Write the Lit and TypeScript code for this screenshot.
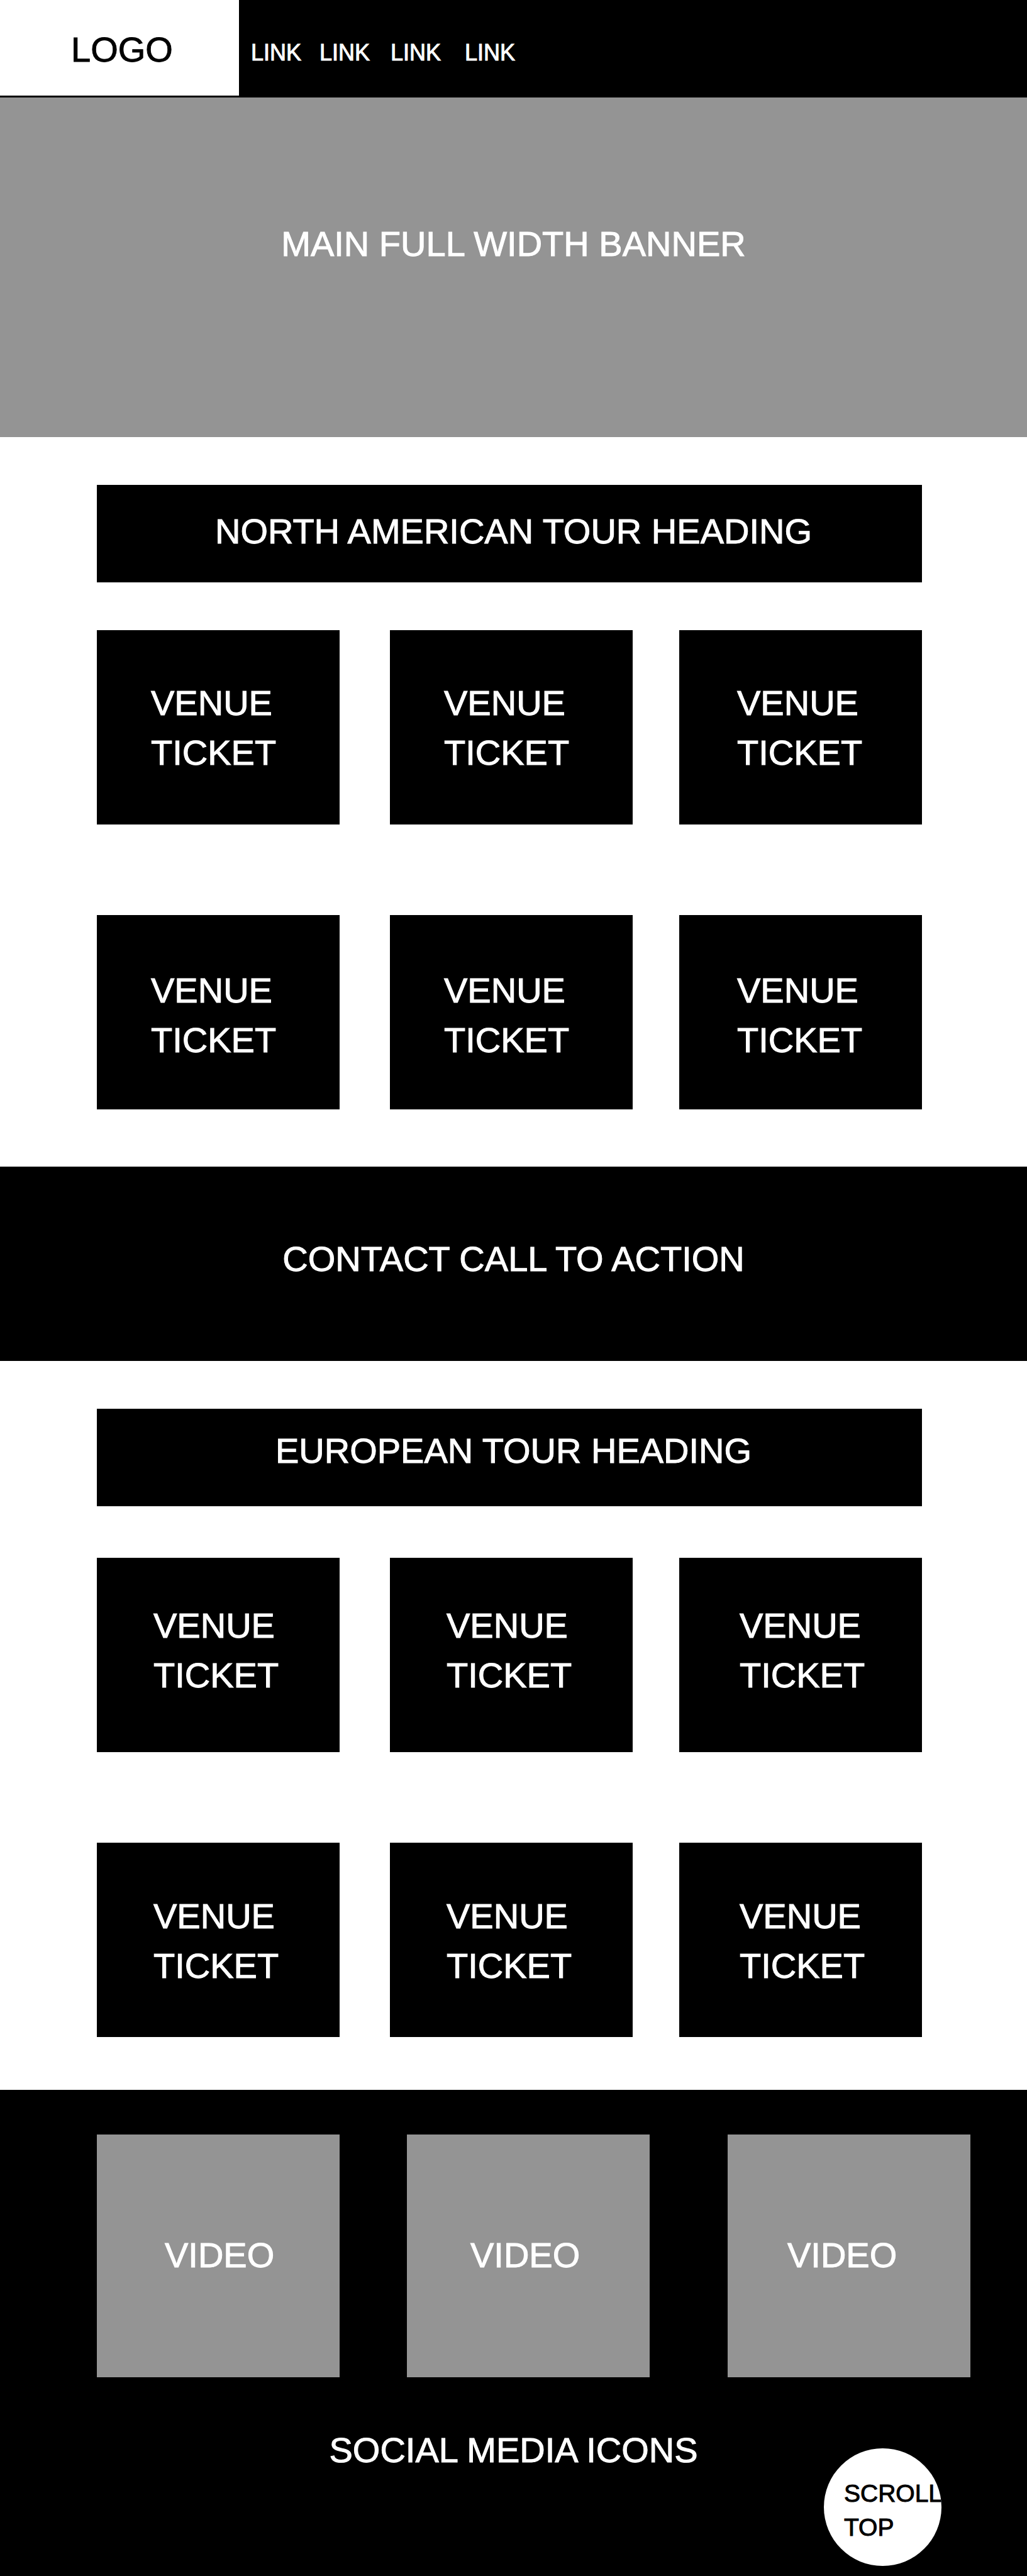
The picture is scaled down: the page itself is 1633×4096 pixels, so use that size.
import { LitElement, html, css } from "lit";
import { customElement, property } from "lit/decorators.js";

/** Heading bar with two rows of three ticket cards. */
@customElement("tour-section")
export class TourSection extends LitElement {
  @property() heading = "";

  static styles = css`
    :host {
      display: block;
      padding: 76px 167px 91px 154px;
    }
    :host([region="europe"]) {
      padding-bottom: 84px;
    }
    .heading {
      margin: 0;
      padding: 34px 0 42px 13px;
      background: #000;
      color: #fff;
      font: inherit;
      text-align: center;
    }
    :host([region="europe"]) .heading {
      padding-top: 27px;
      padding-bottom: 49px;
    }
    .tickets {
      display: grid;
      grid-template-columns: 386fr 80fr 386fr 74fr 386fr;
      row-gap: 144px;
      margin: 76px 0 0;
      padding: 0;
      list-style: none;
    }
    :host([region="europe"]) .tickets {
      margin-top: 82px;
    }
    .ticket {
      box-sizing: border-box;
      min-height: 309px;
      padding: 76px 0 0 86px;
      background: #000;
      color: #fff;
    }
    .ticket:nth-child(3n + 1) {
      grid-column: 1;
    }
    .ticket:nth-child(3n + 2) {
      grid-column: 3;
    }
    .ticket:nth-child(3n) {
      grid-column: 5;
      padding-left: 92px;
    }
    .ticket:nth-child(n + 4) {
      padding-top: 80px;
    }
    :host([region="europe"]) .ticket {
      padding-top: 68px;
      padding-left: 90px;
    }
    :host([region="europe"]) .ticket:nth-child(3n) {
      padding-left: 96px;
    }
    :host([region="europe"]) .ticket:nth-child(n + 4) {
      padding-top: 77px;
    }
  `;

  render() {
    return html`
      <h2 class="heading">${this.heading}</h2>
      <ul class="tickets">
        ${Array.from({ length: 6 }, () => html`<li class="ticket">VENUE<br />TICKET</li>`)}
      </ul>
    `;
  }
}

@customElement("app-root")
export class AppRoot extends LitElement {
  static styles = css`
    :host {
      display: block;
      background: #fff;
      color: #fff;
      font-family: "Liberation Sans", Arial, sans-serif;
      font-size: 56px;
      line-height: 79px;
      -webkit-text-stroke: 1px currentColor;
    }
    a {
      color: inherit;
      text-decoration: none;
    }
    .header {
      display: flex;
      background: #000;
      border-bottom: 3px solid #000;
    }
    .logo {
      box-sizing: border-box;
      flex: 0 0 380px;
      padding: 39px 0 34px 113px;
      background: #fff;
      color: #000;
    }
    .nav {
      display: grid;
      grid-template-columns: 109px 113px 118px auto;
      align-content: start;
      padding: 60px 0 0 19px;
      font-size: 36px;
      line-height: 48px;
    }
    .banner,
    .contact {
      text-align: center;
    }
    .banner {
      padding: 193px 0 268px;
      background: #949494;
    }
    .contact {
      padding: 107px 0 123px;
      background: #000;
    }
    .title {
      margin: 0;
      font: inherit;
    }
    .footer {
      position: relative;
      padding: 71px 0 161px;
      background: #000;
    }
    .videos {
      display: grid;
      grid-template-columns: 386fr 107fr 386fr 124fr 386fr;
      margin: 0;
      padding: 0 90px 0 154px;
      list-style: none;
    }
    .video {
      box-sizing: border-box;
      min-height: 386px;
      padding: 152px 0 0 108px;
      background: #949494;
    }
    .video:nth-child(2) {
      grid-column: 3;
      padding-left: 101px;
    }
    .video:nth-child(3) {
      grid-column: 5;
      padding-left: 95px;
    }
    .social {
      margin: 76px 0 0;
      text-align: center;
    }
    .scroll-top {
      position: absolute;
      right: 136px;
      bottom: 16px;
      display: block;
      box-sizing: border-box;
      width: 187px;
      height: 187px;
      margin: 0;
      padding: 45px 0 34px 32px;
      overflow: hidden;
      border: 0;
      border-radius: 50%;
      background: #fff;
      color: #000;
      font-family: inherit;
      font-size: 39px;
      line-height: 54px;
      text-align: left;
      cursor: pointer;
      -webkit-text-stroke: 1px currentColor;
    }
  `;

  private scrollToTop() {
    window.scrollTo({ top: 0, behavior: "smooth" });
  }

  render() {
    return html`
      <header class="header">
        <a class="logo" href="#">LOGO</a>
        <nav class="nav">
          ${[1, 2, 3, 4].map((n) => html`<a href="#link-${n}">LINK</a>`)}
        </nav>
      </header>
      <main>
        <section class="banner"><h1 class="title">MAIN FULL WIDTH BANNER</h1></section>
        <tour-section region="north-america" heading="NORTH AMERICAN TOUR HEADING"></tour-section>
        <section class="contact"><h2 class="title">CONTACT CALL TO ACTION</h2></section>
        <tour-section region="europe" heading="EUROPEAN TOUR HEADING"></tour-section>
      </main>
      <footer class="footer">
        <ul class="videos">
          ${[1, 2, 3].map(() => html`<li class="video">VIDEO</li>`)}
        </ul>
        <p class="social">SOCIAL MEDIA ICONS</p>
        <button class="scroll-top" type="button" @click=${this.scrollToTop}>SCROLL<br />TOP</button>
      </footer>
    `;
  }
}
